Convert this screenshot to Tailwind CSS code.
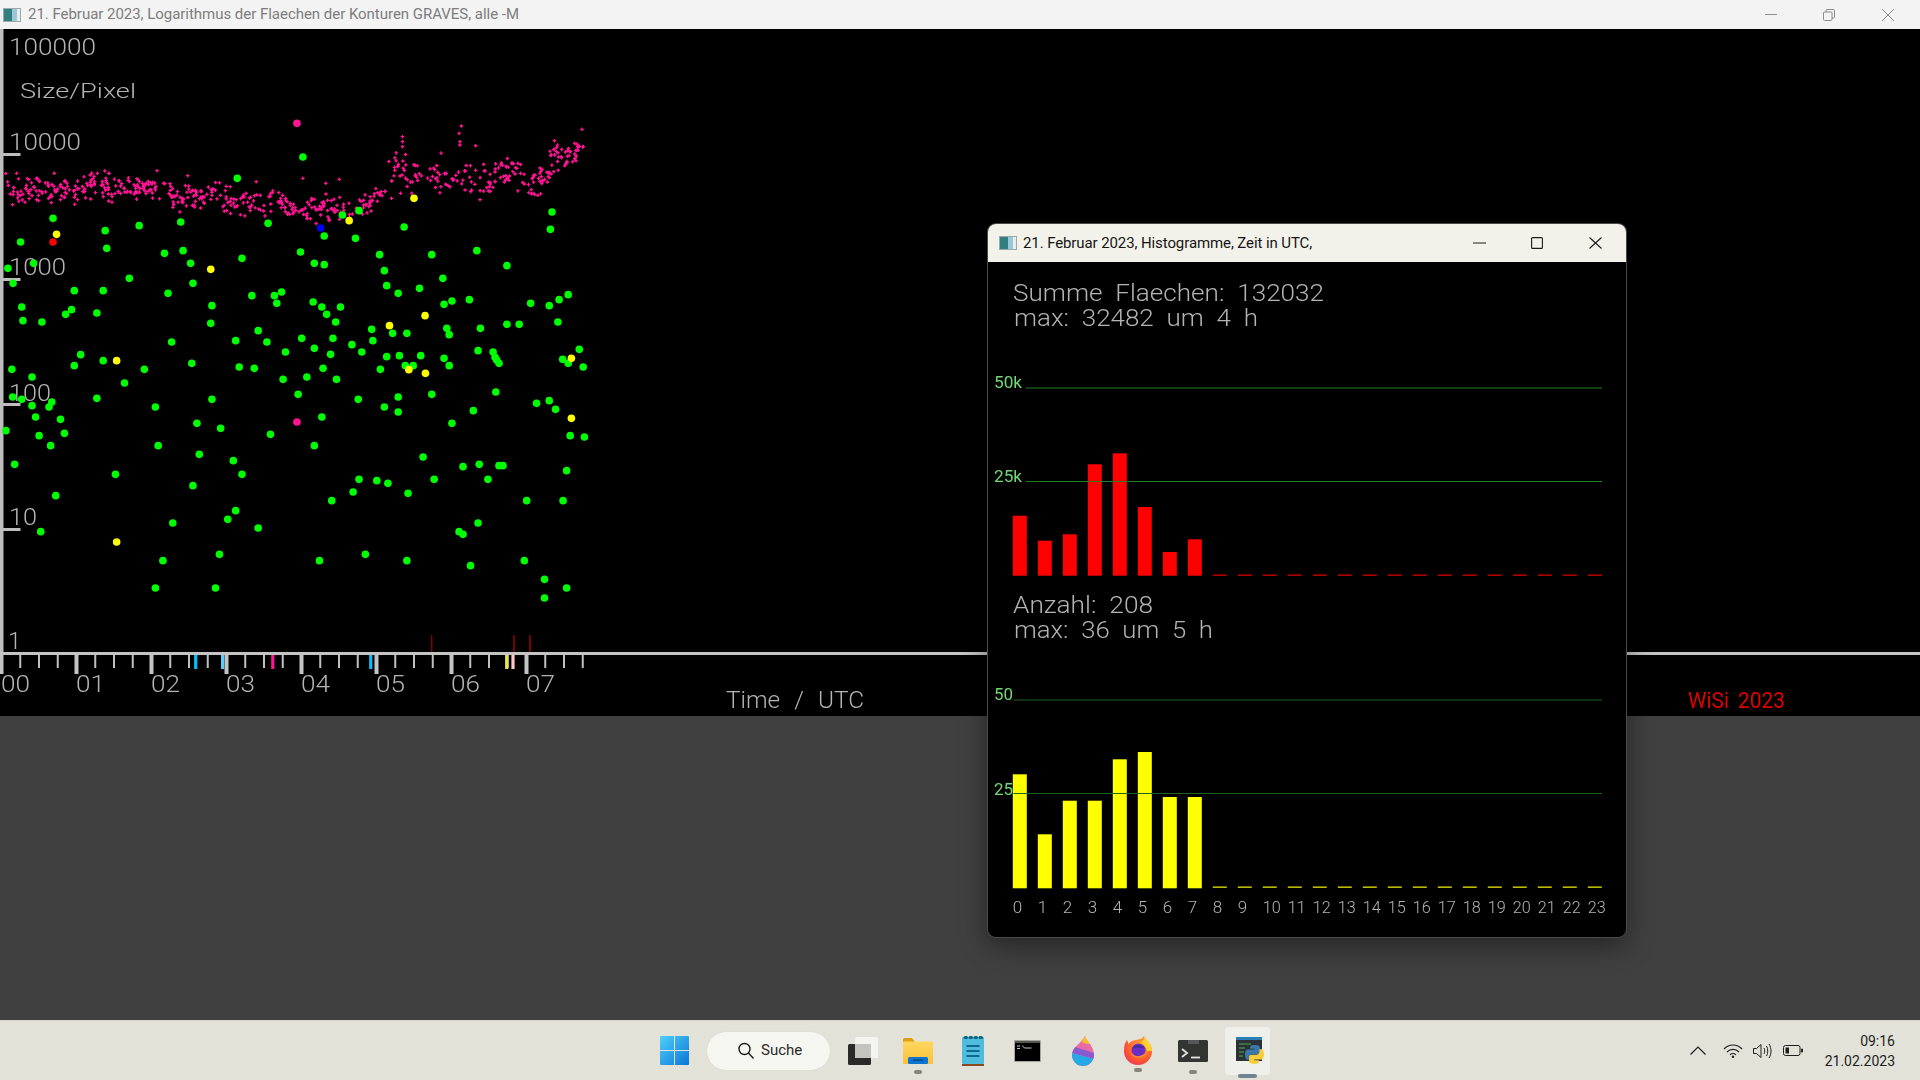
<!DOCTYPE html>
<html lang="de">
<head>
  <meta charset="UTF-8" />
  <title>Logarithmus der Flaechen</title>
  <script src="https://cdn.jsdelivr.net/npm/@tailwindcss/browser@4"></script>
</head>
<body class="h-screen w-screen overflow-hidden bg-[#404040] font-['Roboto',sans-serif]">
  <div class="relative flex h-full flex-col">

    <!-- Main window title bar -->
    <header class="flex h-[29px] shrink-0 items-center bg-[#f3f3f3] pl-[3px]">
      <svg width="18" height="14" viewBox="0 0 18 14"><rect x=".5" y=".5" width="17" height="13" fill="#e8ecec" stroke="#99aaaa"/><rect x="1" y="1" width="8" height="12" fill="#2f7f7f"/><rect x="9" y="1" width="5" height="12" fill="#9cc7d8"/></svg>
      <span class="ml-[7px] text-[15px] tracking-[-0.03px] text-[#7d7d7d]">21. Februar 2023, Logarithmus der Flaechen der Konturen GRAVES, alle -M</span>
      <div class="ml-auto flex items-center pr-[26px]">
        <svg width="12" height="12" viewBox="0 0 12 12" class="mr-[46px]"><path d="M0 5.500h12" stroke="#8c8c8c"/></svg>
        <svg width="12" height="12" viewBox="0 0 12 12" class="mr-[47px]"><path d="M.5 4a1 1 0 0 1 1-1H8a1 1 0 0 1 1 1v6.500a1 1 0 0 1-1 1H1.500a1 1 0 0 1-1-1zM3 3V1.500a1 1 0 0 1 1-1h6.500a1 1 0 0 1 1 1V8a1 1 0 0 1-1 1H9" fill="none" stroke="#8c8c8c"/></svg>
        <svg width="12" height="12" viewBox="0 0 12 12"><path d="M0 0l12 12M12 0L0 12" stroke="#8c8c8c"/></svg>
      </div>
    </header>

    <!-- Scatter plot -->
    <section class="h-[687px] shrink-0 bg-black">
      <svg id="plot" width="1920" height="687" viewBox="0 29 1920 687" class="block blur-[0.35px]">
        <g class="fill-[#b4b4b4] font-light text-[24px]">
          <text x="9" y="55" textLength="87" lengthAdjust="spacingAndGlyphs">100000</text>
          <text x="20" y="98" textLength="116" lengthAdjust="spacingAndGlyphs" class="text-[21px]">Size/Pixel</text>
          <text x="9" y="150" textLength="72" lengthAdjust="spacingAndGlyphs">10000</text>
          <text x="9" y="275" textLength="57" lengthAdjust="spacingAndGlyphs">1000</text>
          <text x="9" y="401" textLength="42" lengthAdjust="spacingAndGlyphs">100</text>
          <text x="9" y="525" textLength="28" lengthAdjust="spacingAndGlyphs">10</text>
          <text x="8" y="649">1</text>
          <text x="1" y="692" textLength="29" lengthAdjust="spacingAndGlyphs">00</text>
          <text x="76" y="692" textLength="29" lengthAdjust="spacingAndGlyphs">01</text>
          <text x="151" y="692" textLength="29" lengthAdjust="spacingAndGlyphs">02</text>
          <text x="226" y="692" textLength="29" lengthAdjust="spacingAndGlyphs">03</text>
          <text x="301" y="692" textLength="29" lengthAdjust="spacingAndGlyphs">04</text>
          <text x="376" y="692" textLength="29" lengthAdjust="spacingAndGlyphs">05</text>
          <text x="451" y="692" textLength="29" lengthAdjust="spacingAndGlyphs">06</text>
          <text x="526" y="692" textLength="29" lengthAdjust="spacingAndGlyphs">07</text>
          <text x="726" y="708" textLength="138" lengthAdjust="spacingAndGlyphs" class="text-[24px] [word-spacing:8px]">Time / UTC</text>
        </g>
        <text x="1688" y="708" textLength="97" lengthAdjust="spacingAndGlyphs" class="fill-[#e00000] text-[22px] [word-spacing:4px]">WiSi 2023</text>
        <g id="axes"></g>
        <path id="pink" fill="none" stroke="#ff1493" stroke-width="1.300"></path>
        <g id="dots"></g>
      </svg>
    </section>

    <!-- Desktop -->
    <div class="flex-1 bg-[#404040]"></div>

    <!-- Taskbar -->
    <footer class="flex h-[60px] shrink-0 items-center border-t border-[#d5d5ca] bg-[#e2e2d8]">
      <svg width="29" height="29" viewBox="0 0 29 29" class="ml-[660px]">
        <defs><linearGradient id="win" x1="0" y1="0" x2="1" y2="1"><stop offset="0" stop-color="#4fd0fb"/><stop offset="1" stop-color="#0a76d6"/></linearGradient></defs>
        <path d="M0 1a1 1 0 0 1 1-1h13v14H0zM15 0h13a1 1 0 0 1 1 1v13H15zM0 15h14v14H1a1 1 0 0 1-1-1zM15 15h14v13a1 1 0 0 1-1 1H15z" fill="url(#win)"/>
      </svg>

      <div class="ml-[18px] flex h-[38px] w-[123px] items-center rounded-full bg-[#f6f6f0] pl-[31px] shadow-[0_0_1px_#c8c8be]">
        <svg width="16" height="17" viewBox="0 0 16 17"><circle cx="6.500" cy="7" r="5.500" fill="none" stroke="#1c1c1c" stroke-width="1.400"/><path d="M10.500 11l5 5.500" stroke="#1c1c1c" stroke-width="1.400"/></svg>
        <span class="ml-[7px] text-[15px] text-[#2a2a2a]">Suche</span>
      </div>

      <svg width="30" height="28" viewBox="0 0 30 28" class="ml-[18px]">
        <rect x="0" y="7" width="23" height="21" rx="1.500" fill="#2a2a2a"/>
        <rect x="7" y="0" width="23" height="21" rx="1.500" fill="#f4f4ee"/>
        <rect x="7" y="7" width="16" height="14" fill="#c4c4be"/>
      </svg>

      <div class="relative ml-[25px] h-[26px] w-[30px]">
        <svg width="30" height="26" viewBox="0 0 30 26">
          <defs><linearGradient id="fold" x1="0" y1="0" x2="0" y2="1"><stop offset="0" stop-color="#ffd75e"/><stop offset="1" stop-color="#f8c13a"/></linearGradient></defs>
          <path d="M0 1.500A1.500 1.500 0 0 1 1.500 0H9l3 4H0z" fill="#dc9f12"/>
          <rect y="3.500" width="30" height="22.500" rx="1" fill="url(#fold)"/>
          <rect x="5" y="19" width="20" height="7" rx="1.500" fill="#0d74d0"/>
          <rect x="10" y="21.500" width="10" height="1.200" fill="#063d7a"/>
        </svg>
        <span class="absolute bottom-[-10px] left-[11px] h-[4px] w-[8px] rounded-full bg-[#85857d]"></span>
      </div>

      <svg width="22" height="30" viewBox="0 0 22 30" class="ml-[29px]">
        <rect y="1" width="22" height="27" rx="1" fill="#4fbbdd"/>
        <rect y="28" width="22" height="2" fill="#8a4a20"/>
        <path d="M3 1.500h1.500M8 1.500h1.500M13 1.500h1.500M18 1.500h1.500" stroke="#0d6580" stroke-width="3" stroke-linecap="round"/>
        <path d="M4.500 10h13M4.500 15h13M4.500 20h13" stroke="#0b6a8e" stroke-width="1.800"/>
      </svg>

      <svg width="27" height="22" viewBox="0 0 27 22" class="ml-[30px]">
        <rect width="27" height="22" rx="1" fill="#a5a5a0"/>
        <rect x="1" y="3" width="25" height="18" fill="#000"/>
        <rect x="1" y="1" width="25" height="2" fill="#55554f"/>
        <path d="M3 6h3M3 8.500h3M8 5.500l2.500 2.500h7" stroke="#c8c8c8" stroke-width="1"/>
      </svg>

      <svg width="22" height="30" viewBox="0 0 22 30" class="ml-[31px]">
        <defs>
          <clipPath id="drop"><path d="M13 0c0 4 9 9 9 19a11 11 0 0 1-22 0C0 11 9 8 13 0z"/></clipPath>
        </defs>
        <g clip-path="url(#drop)">
          <rect width="22" height="30" fill="#e86aa8"/>
          <path d="M9 0h13v9L11 7z" fill="#fbbf24"/>
          <path d="M0 10l22 7v6L0 17z" fill="#8a5ad0"/>
          <path d="M0 17l22 6v7H0z" fill="#25a9e6"/>
        </g>
      </svg>

      <div class="relative ml-[30px] h-[29px] w-[28px]">
        <svg width="28" height="29" viewBox="0 0 28 29">
          <defs>
            <radialGradient id="fox" cx=".6" cy=".35" r=".8"><stop offset="0" stop-color="#ffb02e"/><stop offset=".6" stop-color="#ff5a2c"/><stop offset="1" stop-color="#e8246a"/></radialGradient>
          </defs>
          <path d="M20 0c1 4 8 7 8 15a14 14 0 0 1-28 0c0-4 .5-8 3-11l1.500 4C7 5 9 4.500 12 4c3-.5 7-1 8-4z" fill="url(#fox)"/>
          <path d="M20 0c1 4 8 7 8 15l-5 0c0-4-3-7-6-8 2-2 3-4 3-7z" fill="#ffd42e"/>
          <circle cx="14.500" cy="14.500" r="7" fill="#6a2ec4"/>
          <path d="M8.500 12c3-3.500 9-3.500 12 0-4-1-8-1-12 0z" fill="#2d2a8a"/>
          <path d="M7 16c4 6 11 5 15 0-1 7-14 8-15 0z" fill="#ff8f2c"/>
        </svg>
        <span class="absolute bottom-[-7px] left-[10px] h-[4px] w-[8px] rounded-full bg-[#85857d]"></span>
      </div>

      <div class="relative ml-[26px] h-[22px] w-[30px]">
        <svg width="30" height="22" viewBox="0 0 30 22">
          <rect width="30" height="22" rx="1.500" fill="#333532"/>
          <rect x="10" width="11" height="4" fill="#55575a"/>
          <path d="M4 9l5 4-5 4" fill="none" stroke="#e4e4e4" stroke-width="1.800"/>
          <path d="M13 17.500h9" stroke="#e4e4e4" stroke-width="1.800"/>
        </svg>
        <span class="absolute bottom-[-12px] left-[11px] h-[4px] w-[8px] rounded-full bg-[#85857d]"></span>
      </div>

      <div class="relative ml-[17px] flex h-[48px] w-[45px] items-center justify-center rounded-[4px] bg-[#f0f0ea] pl-[5px]">
        <svg width="28" height="28" viewBox="0 0 28 28">
          <rect width="26" height="24" fill="#2b3136"/>
          <rect width="26" height="3" fill="#2a7fb8"/>
          <path d="M3 7h12M3 11h6M3 15h5M3 19h4" stroke="#4fae4f" stroke-width="1.200"/>
          <g transform="translate(9 8) scale(.95)">
            <path d="M10 0C5 0 5.500 2 5.500 2v2h4.700v.7H3.500S0 4.300 0 10s3 5.500 3 5.500h1.900v-2.700s-.1-3 3-3h5s2.800 0 2.800-2.800V2.800S16.100 0 10 0z" fill="#3b78ac"/>
            <path d="M10 20c5 0 4.500-2 4.500-2v-2H9.800v-.7h6.700S20 15.700 20 10s-3-5.500-3-5.500h-1.900v2.700s.1 3-3 3h-5s-2.800 0-2.800 2.800v4.200S3.900 20 10 20z" fill="#f7cf3c"/>
          </g>
        </svg>
        <span class="absolute bottom-[-3px] left-[13px] h-[4px] w-[19px] rounded-full bg-[#6f8492]"></span>
      </div>

      <!-- Tray -->
      <div class="ml-auto flex items-center pr-[25px] text-[#1e1e1e]">
        <svg width="16" height="9" viewBox="0 0 16 9"><path d="M.5 8.500L8 1l7.500 7.500" fill="none" stroke="#1e1e1e" stroke-width="1.200"/></svg>
        <svg width="20" height="14" viewBox="0 0 20 14" class="ml-[17px]"><path d="M1 5c5-5.300 13-5.300 18 0M4 8c3.300-3.500 8.700-3.500 12 0M7 10.800c1.700-1.700 4.300-1.700 6 0" fill="none" stroke="#1e1e1e" stroke-width="1.100"/><circle cx="10" cy="12.800" r="1.200" fill="#1e1e1e"/></svg>
        <svg width="20" height="16" viewBox="0 0 20 16" class="ml-[10px]"><path d="M.5 5.500h3L8 1.500v13l-4.500-4h-3z" fill="none" stroke="#1e1e1e"/><path d="M11 5c1 2 1 4 0 6M13.500 3c1.700 3 1.700 7 0 10M16 1c2.700 4 2.700 10 0 14" fill="none" stroke="#1e1e1e"/></svg>
        <svg width="20" height="11" viewBox="0 0 20 11" class="ml-[10px]"><rect x=".5" y=".5" width="16.500" height="10" rx="2" fill="none" stroke="#1e1e1e"/><rect x="2.500" y="2.500" width="3.500" height="6" fill="#1e1e1e"/><rect x="18" y="3.500" width="2" height="4" rx="1" fill="#1e1e1e"/></svg>
        <div class="ml-[22px] text-right text-[14px] leading-[20px]">
          <div>09:16</div>
          <div>21.02.2023</div>
        </div>
      </div>
    </footer>

    <!-- Histogram window -->
    <article class="absolute left-[988px] top-[224px] flex h-[713px] w-[638px] flex-col overflow-hidden rounded-lg bg-black shadow-[0_0_0_1px_#4a4a4a,0_8px_28px_rgba(0,0,0,0.45)]">
      <div class="flex h-[38px] shrink-0 items-center bg-[#f3f2ea] pl-[11px]">
        <svg width="18" height="14" viewBox="0 0 18 14"><rect x=".5" y=".5" width="17" height="13" fill="#e8ecec" stroke="#99aaaa"/><rect x="1" y="1" width="8" height="12" fill="#2f7f7f"/><rect x="9" y="1" width="5" height="12" fill="#9cc7d8"/></svg>
        <span class="ml-[6px] text-[15px] tracking-[-0.1px] text-[#151515]">21. Februar 2023, Histogramme, Zeit in UTC,</span>
        <div class="ml-auto flex items-center pr-[24px]">
          <svg width="13" height="12" viewBox="0 0 13 12" class="mr-[45px]"><path d="M0 6h13" stroke="#1a1a1a" stroke-width="1.100"/></svg>
          <svg width="12" height="12" viewBox="0 0 12 12" class="mr-[46px]"><rect x=".6" y=".6" width="10.800" height="10.800" rx="1" fill="none" stroke="#1a1a1a" stroke-width="1.100"/></svg>
          <svg width="13" height="12" viewBox="0 0 13 12"><path d="M.5.500l12 11M12.500.500l-12 11" stroke="#1a1a1a" stroke-width="1.100"/></svg>
        </div>
      </div>
      <svg id="hist" width="638" height="675" viewBox="988 262 638 675" class="block blur-[0.3px]">
        <g class="fill-[#b4b4b4] font-light text-[24px] [word-spacing:6px]">
          <text x="1013" y="301" textLength="311" lengthAdjust="spacingAndGlyphs">Summe Flaechen: 132032</text>
          <text x="1014" y="326" textLength="244" lengthAdjust="spacingAndGlyphs">max: 32482 um 4 h</text>
          <text x="1013" y="613" textLength="140" lengthAdjust="spacingAndGlyphs">Anzahl: 208</text>
          <text x="1014" y="638" textLength="199" lengthAdjust="spacingAndGlyphs">max: 36 um 5 h</text>
        </g>
        <g id="bars"></g>
        <g class="fill-[#74d874] text-[16px]">
          <text x="994" y="388" textLength="28" lengthAdjust="spacingAndGlyphs">50k</text>
          <text x="994" y="482" textLength="28" lengthAdjust="spacingAndGlyphs">25k</text>
          <text x="994" y="700" textLength="19" lengthAdjust="spacingAndGlyphs">50</text>
          <text x="994" y="795" textLength="19" lengthAdjust="spacingAndGlyphs">25</text>
        </g>
        <path d="M1025.500 388H1602M1025.500 481.500H1602" stroke="#1f7f1f" stroke-width="1.200"/>
        <path d="M1013.500 700H1602M1013.500 793.500H1602" stroke="#1c641c" stroke-width="1.200"/>
        <g id="hours" class="fill-[#b4b4b4] text-[17px] font-light"></g>
      </svg>
    </article>
  </div>

  <script>
    const SVG_NS = "http://www.w3.org/2000/svg";
    function add(parent, tag, attrs, text) {
      const el = document.createElementNS(SVG_NS, tag);
      for (const k in attrs) el.setAttribute(k, attrs[k]);
      if (text !== undefined) el.textContent = text;
      parent.appendChild(el);
      return el;
    }
    function rect(parent, x, y, w, h, fill) {
      add(parent, "rect", { x, y, width: w, height: h, fill });
    }

    // axes and ticks
    const axes = document.getElementById("axes");
    rect(axes, 0, 29, 3.5, 626, "#bdbdbd");
    rect(axes, 0, 652, 1920, 3, "#c4c4c4");
    [154, 279, 404, 529].forEach(y => rect(axes, 3, y - 1, 17.5, 3, "#bdbdbd"));
    for (let i = 0; i <= 31; i++) {
      const x = 1.5 + i * 18.75;
      if (i % 4 === 0) rect(axes, x - 2, 655, 4, 19, "#c4c4c4");
      else rect(axes, x - 1, 655, 2, 13, "#c0c0c0");
    }
    [[195.7, "#00bfff"], [222.6, "#54d0ff"], [272.8, "#ff1493"], [370.7, "#00bfff"], [506.7, "#e6e64a"], [513, "#ffc8c8"]]
      .forEach(t => rect(axes, t[0] - 1.6, 655, 3.2, 14, t[1]));
    [[431.8, "#c00000"], [514, "#e80000"], [530, "#f00000"]]
      .forEach(t => rect(axes, t[0] - 0.5, 635, 1, 17, t[1]));

    // contour points, read off the crops: x scale 2.529, y scale 3
    const SX = 2.529;
    const green1 = [[600,535],[766,471],[134,655],[457,666],[678,670],[352,677],[266,692],[1022,681],[1396,636],[1392,688],[908,632],[866,645],[820,708],[899,715],[52,726],[270,745],[416,760],[463,752],[482,790],[612,775],[760,756],[795,790],[820,794],[960,764],[1092,764],[1206,752],[1282,797],[85,790],[20,805],[972,812],[327,835],[33,850],[488,850],[1120,835],[978,857],[1061,865],[188,872],[261,872],[425,880],[637,887],[694,887],[712,876],[700,910],[1007,880],[792,906],[814,921],[861,921],[826,943],[55,921],[181,929],[166,943],[245,939],[536,917],[1123,913],[1143,903],[1187,899],[1342,910],[1389,917],[1414,899],[1437,884],[58,962],[106,966],[533,970],[849,966],[1282,973],[1313,973],[1411,966],[1130,985],[1215,985],[940,988],[993,1000],[1029,1000],[1136,1004],[653,992],[434,1026],[596,1022],[675,1026],[763,1015],[842,1015],[943,1022]];
    const green2 = [[890,14],[795,25],[915,36],[836,43],[722,36],[1209,32],[1247,36],[1465,28],[204,44],[978,50],[1010,47],[1064,47],[1123,55],[1252,52],[1423,58],[30,88],[188,77],[261,62],[365,88],[485,70],[605,81],[643,85],[1025,77],[1045,77],[962,88],[1136,77],[1262,70],[1256,60],[1437,70],[1475,81],[817,85],[81,111],[315,129],[716,118],[776,111],[851,118],[32,171],[55,178],[131,186],[124,201],[81,197],[245,175],[393,201],[536,178],[754,163],[906,178],[1007,171],[1092,163],[1254,156],[972,201],[1007,216],[1197,212],[1357,190],[1389,182],[1405,208],[90,231],[153,238],[498,250],[814,231],[1143,250],[15,272],[558,265],[163,280],[99,287],[684,283],[1442,287],[1478,291],[128,317],[400,317],[795,317],[504,343],[1070,351],[37,373],[590,362],[1171,380],[1212,373],[1262,377],[1272,377],[292,403],[612,403],[1433,392],[908,418],[953,422],[981,430],[1098,418],[1234,418],[488,437],[893,456],[1032,460],[141,467],[839,482],[1332,482],[1424,482],[596,512],[576,538],[437,549],[653,564],[103,575],[1161,575],[1171,583],[1209,549],[555,643],[924,643],[412,662],[808,662],[1029,662],[1326,662],[1190,677],[1377,718],[393,744],[545,744],[1433,744],[1377,774]];
    const dots = document.getElementById("dots");
    const dot = (x, y, fill) => add(dots, "circle", { cx: x / SX, cy: y / 3, r: 3.8, fill });
    const dot2 = (x, y, fill) => dot(x, y + 1020, fill);
    green1.forEach(p => dot(p[0], p[1], "#00ff00"));
    green2.forEach(p => dot2(p[0], p[1], "#00ff00"));
    [[143,703],[883,662],[1047,595],[533,808],[1075,947],[985,977]].forEach(p => dot(p[0], p[1], "#ffff00"));
    [[295,62],[1034,89],[1076,100],[1445,55],[1445,235],[295,606]].forEach(p => dot2(p[0], p[1], "#ffff00"));
    dot(134, 726, "#ff0000");
    dot(811, 684, "#0000ff");
    dot(751, 370, "#ff1493");
    dot2(751, 246, "#ff1493");

    // dense band of small contours, seeded so that each run looks the same
    let seed = 20230221;
    const rnd = () => (seed = (seed * 16807) % 2147483647) / 2147483647;
    const band = [[15,560,25],[100,568,22],[200,565,25],[300,570,22],[400,570,22],[480,585,25],[560,588,22],[640,610,20],[740,625,22],[800,615,25],[860,630,25],[930,600,18],[970,590,15],[985,515,25],[1050,512,20],[1130,545,20],[1180,525,22],[1240,550,18],[1290,505,22],[1340,550,25],[1380,555,18],[1400,472,18],[1440,490,20],[1472,432,14]];
    function centre(x) {
      for (let i = 1; i < band.length; i++) {
        if (x <= band[i][0]) {
          const a = band[i - 1], b = band[i], t = (x - a[0]) / (b[0] - a[0]);
          return [a[1] + (b[1] - a[1]) * t, a[2] + (b[2] - a[2]) * t];
        }
      }
      return [band[band.length - 1][1], 14];
    }
    let d = "";
    const plus = (x, y) => {
      const px = x / SX, py = y / 3;
      d += `M${(px - 1.8).toFixed(1)} ${py.toFixed(1)}h3.6M${px.toFixed(1)} ${(py - 1.8).toFixed(1)}v3.6`;
    };
    for (let i = 0; i < 640; i++) {
      const x = 12 + rnd() * 1465;
      const c = centre(x);
      const wobble = 8 * Math.sin(x / 23) + 6 * Math.sin(x / 61);
      const spread = x > 985 ? 2.5 : 1.7;
      const y = c[0] + wobble + (rnd() + rnd() + rnd() - 1.5) * c[1] * spread;
      plus(x, y);
    }
    [[1167,378],[1161,400],[1163,425],[1163,435],[1018,410],[1018,425],[1018,440],[1203,437],[1472,388],[397,512],[137,520],[766,535],[824,550],[858,538],[275,520],[42,520],[228,525],[475,527],[648,545],[1013,580],[990,595],[1402,422]].forEach(p => plus(p[0], p[1]));
    document.getElementById("pink").setAttribute("d", d);

    // histogram bars
    const bars = document.getElementById("bars");
    const hours = document.getElementById("hours");
    const redTops = [515.7, 540.7, 534.3, 464.3, 453.3, 507, 552, 539.3];
    const yellowTops = [774.3, 834.3, 800.7, 800.7, 759.3, 752, 797, 797];
    for (let h = 0; h < 24; h++) {
      const x = 1012.8 + h * 25;
      if (h < 8) {
        rect(bars, x, redTops[h], 14, 575.7 - redTops[h], "#ff0000");
        rect(bars, x, yellowTops[h], 14, 888.3 - yellowTops[h], "#ffff00");
      } else {
        rect(bars, x, 574.5, 14, 1.3, "#d80000");
        rect(bars, x, 886.5, 14, 1.3, "#e6e600");
      }
      const label = add(hours, "text", { x, y: 913 }, String(h));
      if (h > 9) { label.setAttribute("textLength", "18"); label.setAttribute("lengthAdjust", "spacingAndGlyphs"); }
    }
  </script>
</body>
</html>
